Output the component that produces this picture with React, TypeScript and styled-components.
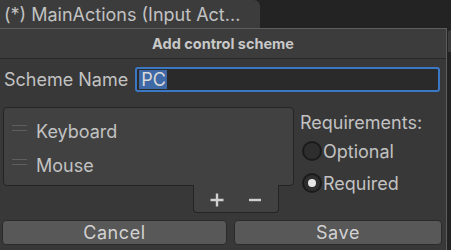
import styled, { createGlobalStyle } from "styled-components";

const GlobalStyle = createGlobalStyle`
  html, body {
    margin: 0;
    padding: 0;
    background: #232323;
    width: 451px;
    height: 250px;
    overflow: hidden;
  }
  * {
    box-sizing: border-box;
  }
`;

const Page = styled.div`
  display: flex;
  flex-direction: column;
  width: 451px;
  height: 250px;
  font-family: Inter, "Noto Sans", sans-serif;
  color: #c2c2c2;
`;

const TabBar = styled.div`
  display: flex;
  height: 28px;
`;

const Tab = styled.div`
  width: 260px;
  height: 28px;
  background: #3c3c3c;
  border-top-right-radius: 6px;
  padding-left: 4px;
  font-size: 18px;
  line-height: 30px;
  white-space: nowrap;
`;

const Body = styled.div`
  flex: 1;
  display: flex;
`;

const Dialog = styled.div`
  width: 447px;
  display: flex;
  flex-direction: column;
  background: #383838;
  border-top: 1px solid #5d5d5d;
  border-right: 1px solid #5d5d5d;
`;

const Side = styled.div`
  flex: 1;
  padding: 2px 0 0 1px;
`;

const SideTab = styled.div`
  height: 22px;
  background: #3c3c3c;
  border-top-left-radius: 3px;
`;

const Header = styled.div`
  height: 30px;
  background: #3c3c3c;
  border-bottom: 1px solid #282828;
  text-align: center;
  font-size: 14.5px;
  font-weight: 700;
  line-height: 29px;
  color: #c8c8c8;
`;

const NameRow = styled.div`
  display: flex;
  align-items: flex-start;
  gap: 7px;
  padding: 8px 6px 0 4px;
  height: 36px;
`;

const Label = styled.span`
  font-size: 18px;
  line-height: 25px;
  white-space: nowrap;
`;

const Input = styled.div`
  flex: 1;
  height: 25px;
  border: 2px solid #3b78c4;
  border-radius: 3px;
  background: #2a2a2a;
  padding: 1px 2px;
  display: flex;
  align-items: stretch;
`;

const Selection = styled.span`
  background: #3e68a6;
  color: #d8d8d8;
  font-size: 18px;
  line-height: 19px;
  padding: 0 1px 0 2px;
`;

const Middle = styled.div`
  display: flex;
  gap: 6px;
  padding: 12px 0 0 3px;
  height: 121px;
`;

const ListColumn = styled.div`
  display: flex;
  flex-direction: column;
  width: 291px;
`;

const List = styled.div`
  height: 79px;
  background: #414141;
  border: 1px solid #242424;
  border-radius: 4px;
  padding: 11px 0 0 8px;
  display: flex;
  flex-direction: column;
  gap: 10px;
`;

const Item = styled.div`
  display: flex;
  align-items: center;
  gap: 9px;
  height: 24px;
  font-size: 18px;
`;

const Handle = styled.div`
  width: 15px;
  height: 6px;
  border-top: 1px solid #5e5e5e;
  border-bottom: 1px solid #5e5e5e;
  margin-top: -7px;
`;

const Footer = styled.div`
  align-self: flex-start;
  margin-left: 190px;
  margin-top: -1px;
  width: 86px;
  height: 28px;
  background: #414141;
  border: 1px solid #242424;
  border-top: none;
  border-radius: 0 0 4px 4px;
  display: flex;
  align-items: center;
  gap: 24px;
  padding: 2px 0 0 16px;
`;

const Requirements = styled.div`
  display: flex;
  flex-direction: column;
  padding-top: 3px;
`;

const Radio = styled.label`
  display: flex;
  align-items: center;
  font-size: 18px;
  height: 32px;
  margin-left: 2px;
`;

const Dot = styled.span<{ $on?: boolean }>`
  width: 20px;
  height: 20px;
  border-radius: 50%;
  background: #2e2e2e;
  border: 2px solid #1b1b1b;
  display: flex;
  align-items: center;
  justify-content: center;
  margin-right: 1px;
  &::after {
    content: "";
    display: ${(p) => (p.$on ? "block" : "none")};
    width: 8px;
    height: 8px;
    border-radius: 50%;
    background: #e6e6e6;
  }
`;

const Buttons = styled.div`
  display: flex;
  gap: 7px;
  padding: 4px 4px 0 2px;
`;

const Button = styled.button<{ $w: number }>`
  width: ${(p) => p.$w}px;
  height: 25px;
  background: #585858;
  border: 1px solid #2a2a2a;
  border-radius: 4px;
  color: #d2d2d2;
  font-family: Inter, "Noto Sans", sans-serif;
  font-size: 18px;
  letter-spacing: 0.6px;
  line-height: 22px;
  padding: 0;
`;

function PlusIcon() {
  return (
    <svg width="14" height="14" viewBox="0 0 14 14">
      <path d="M7 0.5v13M0.5 7h13" stroke="#cfcfcf" strokeWidth="2.4" />
    </svg>
  );
}

function MinusIcon() {
  return (
    <svg width="14" height="14" viewBox="0 0 14 14">
      <path d="M1 7h12" stroke="#cfcfcf" strokeWidth="2.4" />
    </svg>
  );
}

export default function App() {
  return (
    <Page>
      <GlobalStyle />
      <TabBar>
        <Tab>(*) MainActions (Input Act...</Tab>
      </TabBar>
      <Body>
        <Dialog>
          <Header>Add control scheme</Header>
          <NameRow>
            <Label>Scheme Name</Label>
            <Input>
              <Selection>PC</Selection>
            </Input>
          </NameRow>
          <Middle>
            <ListColumn>
              <List>
                <Item>
                  <Handle />
                  Keyboard
                </Item>
                <Item>
                  <Handle />
                  Mouse
                </Item>
              </List>
              <Footer>
                <PlusIcon />
                <MinusIcon />
              </Footer>
            </ListColumn>
            <Requirements>
              <Label>Requirements:</Label>
              <Radio>
                <Dot />
                Optional
              </Radio>
              <Radio>
                <Dot $on />
                Required
              </Radio>
            </Requirements>
          </Middle>
          <Buttons>
            <Button $w={226}>Cancel</Button>
            <Button $w={209}>Save</Button>
          </Buttons>
        </Dialog>
        <Side>
          <SideTab />
        </Side>
      </Body>
    </Page>
  );
}
